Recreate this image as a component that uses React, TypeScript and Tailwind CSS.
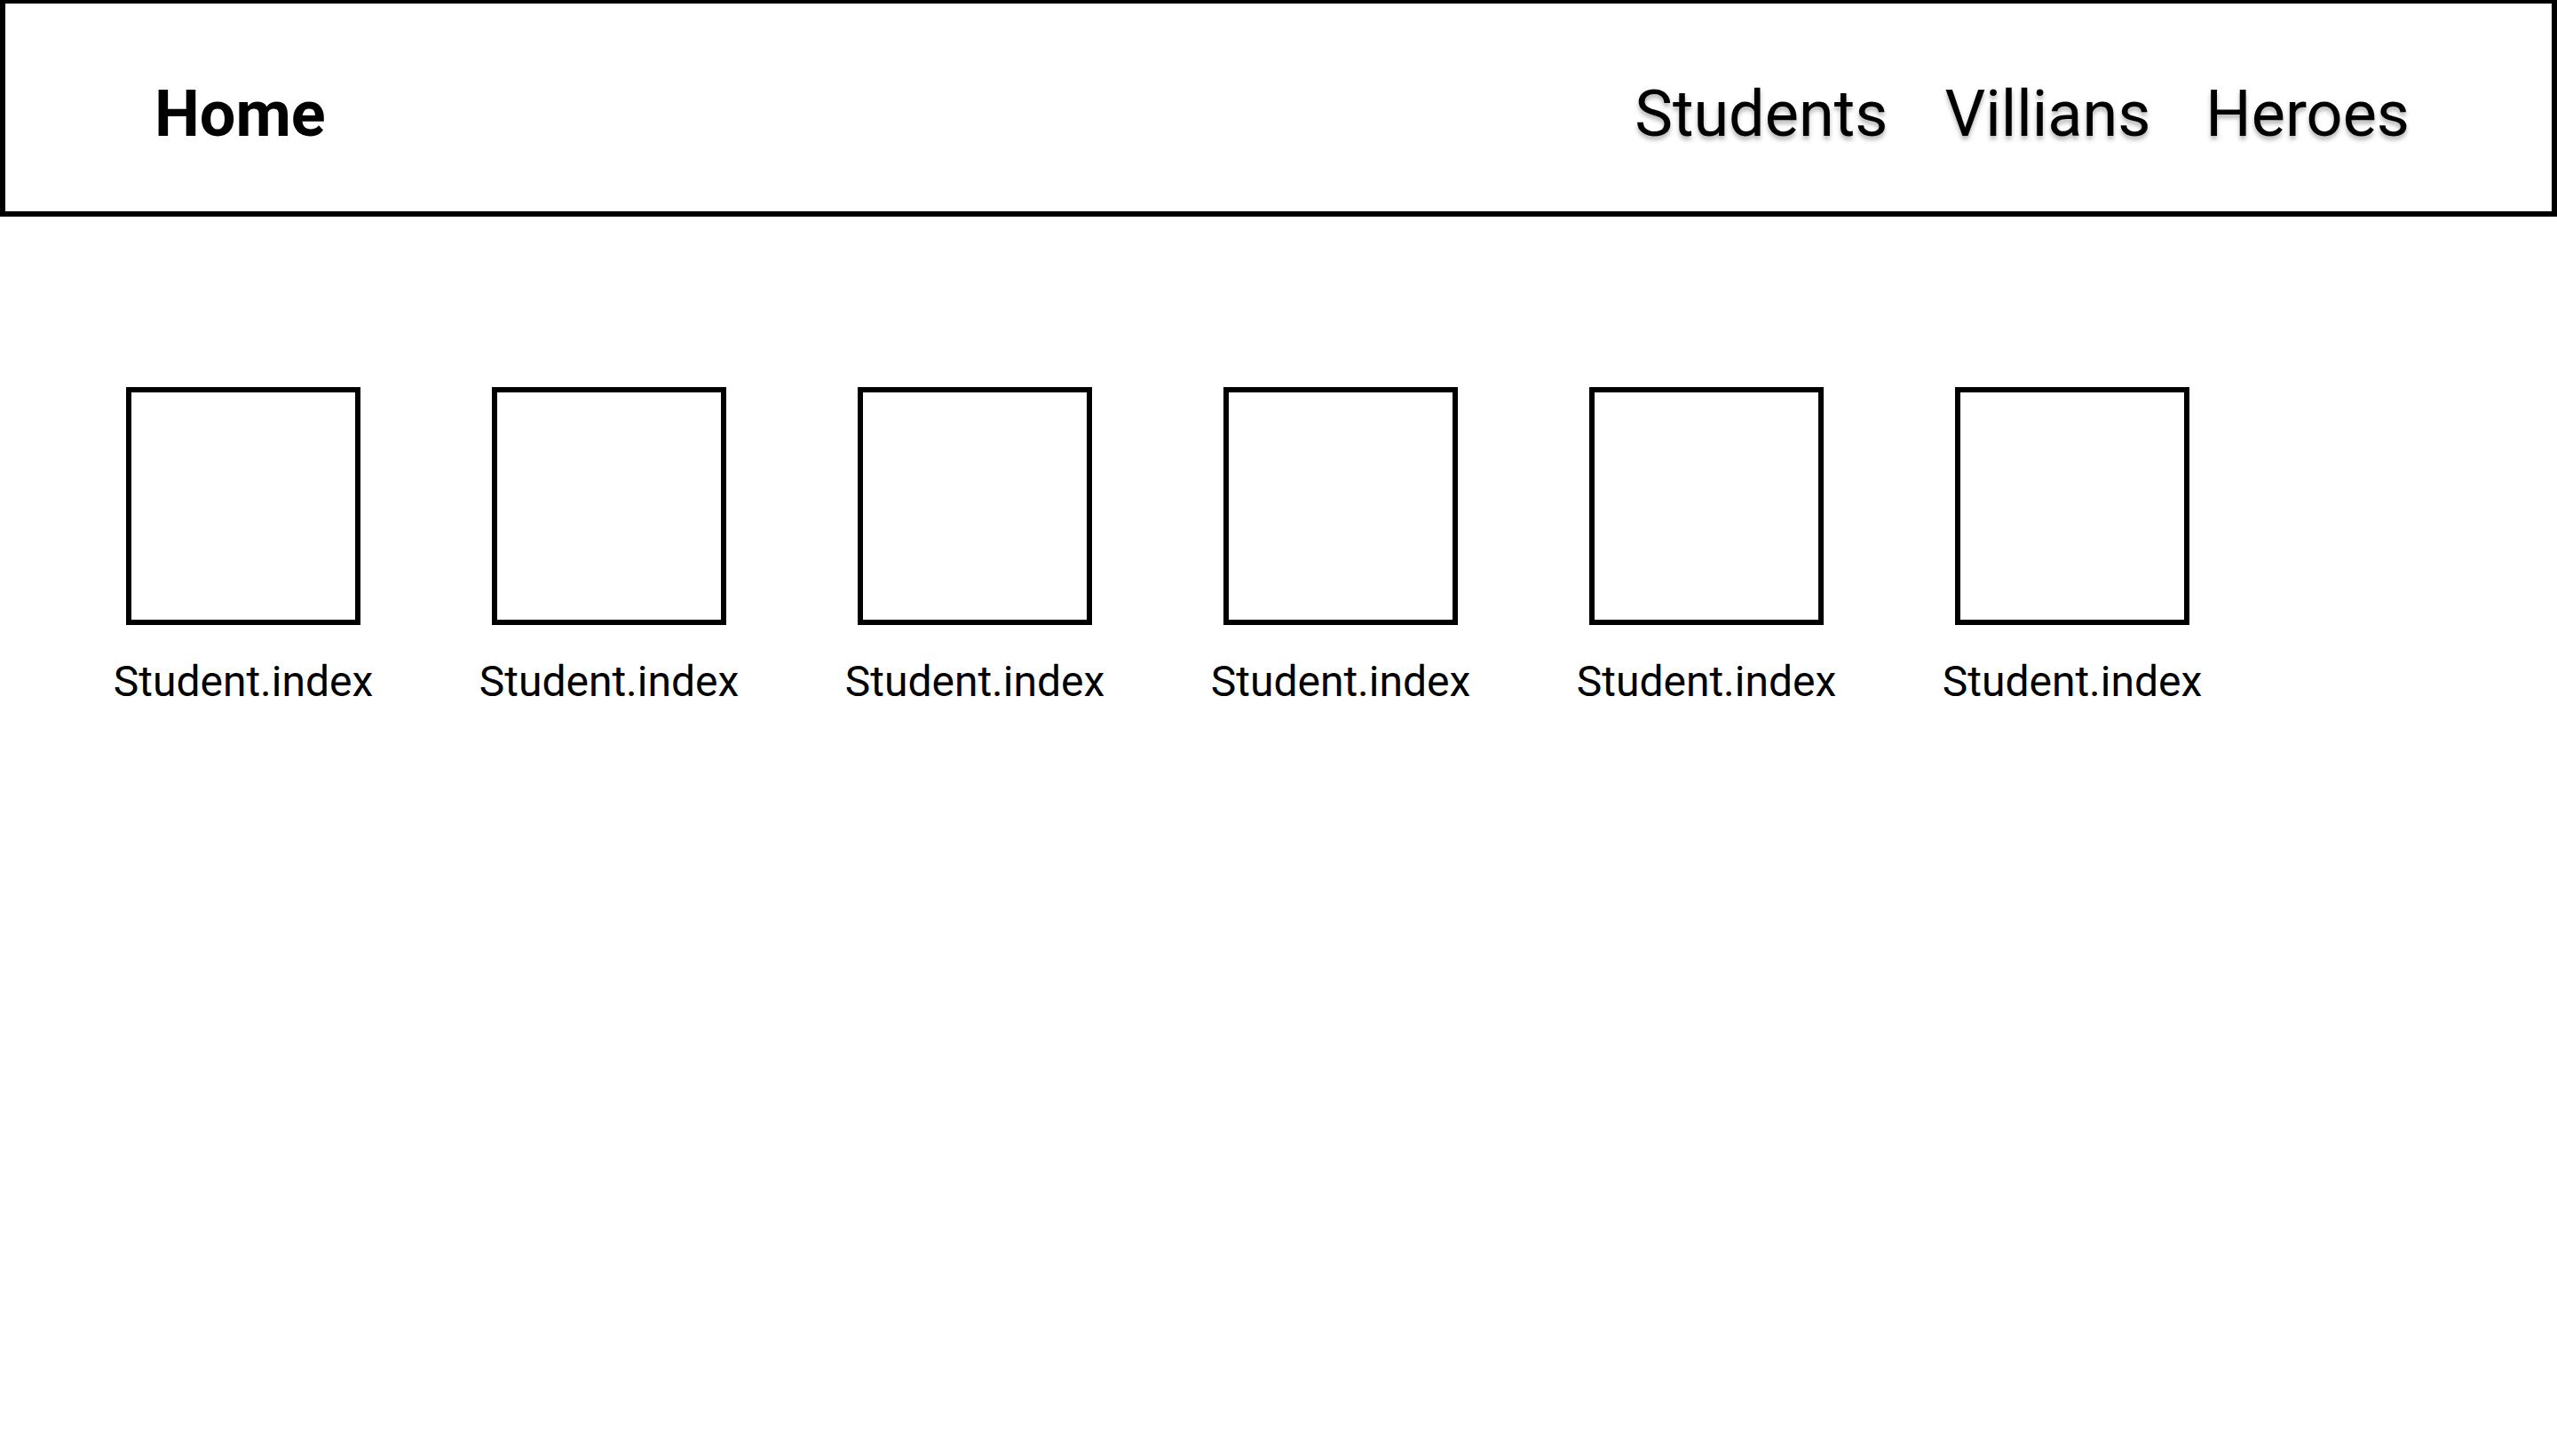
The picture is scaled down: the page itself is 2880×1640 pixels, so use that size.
const navLinks = [
  { label: 'Students', gap: '' },
  { label: 'Villians', gap: 'ml-[64px]' },
  { label: 'Heroes', gap: 'ml-[62px]' },
];

const students = Array.from({ length: 6 }, (_, i) => ({ id: i, label: 'Student.index' }));

export default function App() {
  return (
    <div className="min-h-screen w-full bg-white text-black font-['Roboto',sans-serif]">
      {/* Top bar */}
      <header className="h-[244px] border-[6px] border-t-4 border-black flex items-start justify-between pt-[89px] pl-[168px] pr-[160px]">
        <a className="text-[72px] leading-none font-bold">Home</a>
        <nav className="flex">
          {navLinks.map(link => (
            <a
              key={link.label}
              className={`${link.gap} text-[72px] leading-none font-normal [text-shadow:0px_4px_5px_rgba(0,0,0,0.3)]`}
            >
              {link.label}
            </a>
          ))}
        </nav>
      </header>

      {/* Student cards */}
      <main className="pt-[192px] pl-[142px] flex gap-[148px]">
        {students.map(s => (
          <div key={s.id} className="w-[264px] flex flex-col items-center">
            <div className="w-[264px] h-[268px] border-[6px] border-black" />
            <span className="mt-[40px] text-[48px] leading-none whitespace-nowrap">{s.label}</span>
          </div>
        ))}
      </main>
    </div>
  );
}
